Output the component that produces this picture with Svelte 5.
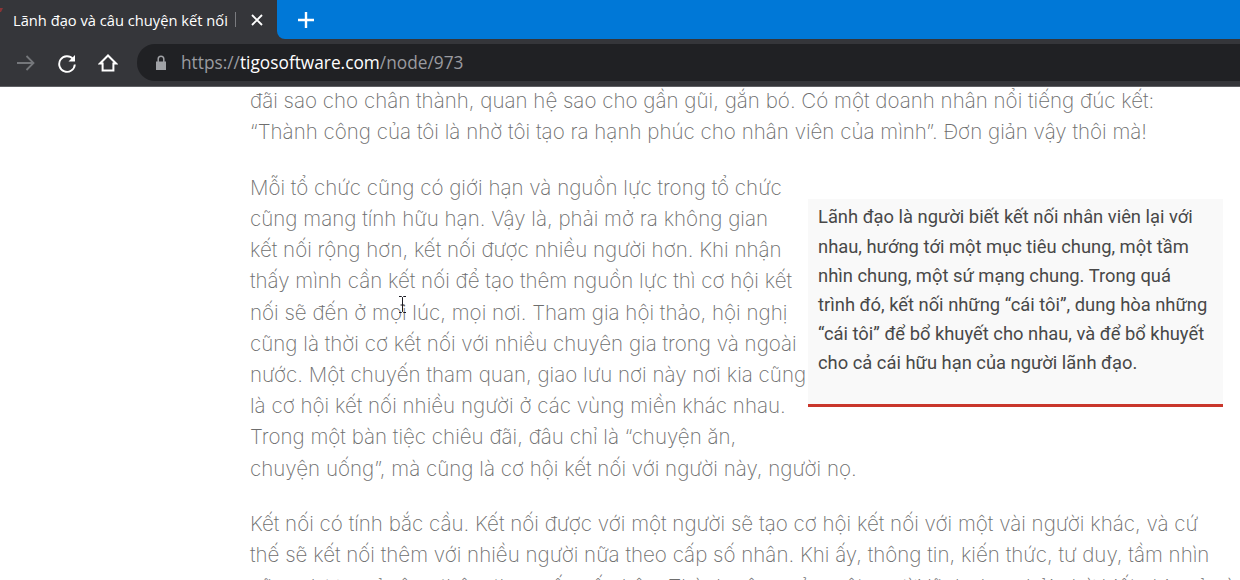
<script>
  const topLines = [
    'đãi sao cho chân thành, quan hệ sao cho gần gũi, gắn bó. Có một doanh nhân nổi tiếng đúc kết:',
    '“Thành công của tôi là nhờ tôi tạo ra hạnh phúc cho nhân viên của mình”. Đơn giản vậy thôi mà!'
  ];
  const midLines = [
    'Mỗi tổ chức cũng có giới hạn và nguồn lực trong tổ chức',
    'cũng mang tính hữu hạn. Vậy là, phải mở ra không gian',
    'kết nối rộng hơn, kết nối được nhiều người hơn. Khi nhận',
    'thấy mình cần kết nối để tạo thêm nguồn lực thì cơ hội kết',
    'nối sẽ đến ở mọi lúc, mọi nơi. Tham gia hội thảo, hội nghị',
    'cũng là thời cơ kết nối với nhiều chuyên gia trong và ngoài',
    'nước. Một chuyến tham quan, giao lưu nơi này nơi kia cũng',
    'là cơ hội kết nối nhiều người ở các vùng miền khác nhau.',
    'Trong một bàn tiệc chiêu đãi, đâu chỉ là “chuyện ăn,',
    'chuyện uống”, mà cũng là cơ hội kết nối với người này, người nọ.'
  ];
  const botLines = [
    'Kết nối có tính bắc cầu. Kết nối được với một người sẽ tạo cơ hội kết nối với một vài người khác, và cứ',
    'thế sẽ kết nối thêm với nhiều người nữa theo cấp số nhân. Khi ấy, thông tin, kiến thức, tư duy, tầm nhìn',
    'cũng được mở rộng thêm theo cấp số nhân. Thành công của một người lãnh đạo phải nhờ biết chia sẻ và'
  ];
  const quote = [
    'Lãnh đạo là người biết kết nối nhân viên lại với',
    'nhau, hướng tới một mục tiêu chung, một tầm',
    'nhìn chung, một sứ mạng chung. Trong quá',
    'trình đó, kết nối những “cái tôi”, dung hòa những',
    '“cái tôi” để bổ khuyết cho nhau, và để bổ khuyết',
    'cho cả cái hữu hạn của người lãnh đạo.'
  ];
</script>

<div class="page">
  <header class="chrome">
    <div class="tabs">
      <div class="tab">
        <span class="title">Lãnh đạo và câu chuyện kết nối</span>
        <span class="sep"></span>
        <svg class="close" viewBox="0 0 12 12" width="12" height="12"><path d="M1 1l10 10M11 1L1 11" stroke="#fff" stroke-width="1.9" fill="none"/></svg>
      </div>
      <div class="strip">
        <svg class="plus" viewBox="0 0 16 16" width="16" height="16"><path d="M8 0v16M0 8h16" stroke="#fff" stroke-width="2.4" fill="none"/></svg>
      </div>
    </div>
    <div class="toolbar">
      <svg class="ic" viewBox="0 0 20 20" width="20" height="20"><path d="M1 10h16.500M10.500 3L17.500 10l-7 7" stroke="#75777b" stroke-width="1.800" fill="none"/></svg>
      <svg class="ic reload" viewBox="0 0 20 20" width="20" height="20"><path d="M16 6A7.800 7.800 0 1 0 17.800 11.500" stroke="#fff" stroke-width="1.900" fill="none"/><path d="M18 2v6.500h-6.500z" fill="#fff"/></svg>
      <svg class="ic home" viewBox="0 0 20 20" width="20" height="20"><path d="M2 10.500L10 2.500l8 8h-2.600v7H4.600v-7z" stroke="#fff" stroke-width="2" stroke-linejoin="miter" fill="none"/></svg>
      <div class="omni">
        <svg class="lock" viewBox="0 0 12 15" width="12" height="15"><path d="M1 6.500h10V15H1z" fill="#a0a2a6"/><path d="M3.200 7V4a2.800 2.800 0 0 1 5.600 0v3" stroke="#a0a2a6" stroke-width="1.500" fill="none"/></svg>
        <span class="url"><span class="dim">https://</span>tigosoftware.com<span class="dim">/node/973</span></span>
      </div>
    </div>
  </header>

  <main class="article">
    <div class="para">
      {#each topLines as l}<div class="ln">{l}</div>{/each}
    </div>
    <div class="float-row">
      <div class="para">
        {#each midLines as l}<div class="ln">{l}</div>{/each}
      </div>
      <aside class="quote">
        {#each quote as l}<div class="qln">{l}</div>{/each}
      </aside>
    </div>
    <div class="para">
      {#each botLines as l}<div class="ln">{l}</div>{/each}
    </div>
  </main>

  <svg class="favicon" viewBox="0 0 3 4" width="3" height="4"><path d="M0 0h3L1 4H0z" fill="#8a3436"/></svg>
  <svg class="cursor" viewBox="0 0 9 17" width="9" height="17"><path d="M1 .5h2.500l1 1 1-1H8M4.500 1.500v14M1 16.500h2.500l1-1 1 1H8M2.500 9h4" stroke="#1c1c24" stroke-width="1" fill="none"/></svg>
</div>

<style>
  :global(body) { margin: 0; background: #fff; overflow: hidden; }
  .page { position: relative; width: 1240px; height: 580px; overflow: hidden; background: #fff; }
  .chrome { height: 87px; background: #35363a; display: flex; flex-direction: column; box-sizing: border-box; border-bottom: 1px solid #5f6064; }
  .tabs { height: 39px; display: flex; }
  .tab { width: 277px; display: flex; align-items: center; padding-left: 13px; box-sizing: border-box; color: #fff; font: 14.700px "Open Sans", "Noto Sans", sans-serif; flex: none; }
  .title { white-space: nowrap; width: 222px; }
  .sep { width: 1px; height: 15px; background: #7a7b7f; }
  .close { margin-left: 15px; }
  .strip { flex: 1; background: #0078d7; border-radius: 0 0 0 8px; display: flex; align-items: center; }
  .plus { margin-left: 21px; }
  .toolbar { flex: 1; display: flex; align-items: center; padding-left: 16px; }
  .ic { flex: none; }
  .reload { margin-left: 21px; }
  .home { margin-left: 21px; }
  .omni { flex: 1; height: 37px; margin-left: 19px; background: #202124; border-radius: 18px 0 0 18px; display: flex; align-items: center; padding-left: 18px; }
  .lock { margin-right: 14px; }
  .url { font: 17.300px "Open Sans", "Noto Sans", sans-serif; color: #fff; white-space: nowrap; }
  .dim { color: #9a9ba0; }
  .article { margin-left: 250px; margin-top: -2px; color: #6e6e6e; font-family: "Inter", "Noto Sans", sans-serif; font-weight: 200; font-size: 20.550px; }
  .para { margin-bottom: 24.500px; }
  .ln { height: 31.200px; line-height: 31.200px; white-space: nowrap; }
  .float-row { position: relative; }
  .quote { position: absolute; left: 558px; top: 27.500px; width: 415px; height: 208px; box-sizing: border-box; background: #f9f9f9; border-bottom: 3px solid #c9362b; padding: 3px 0 0 10px; color: #484848; font: 400 18.350px/29.200px "Roboto", sans-serif; }
  .qln { white-space: nowrap; }
  .favicon { position: absolute; left: 0; top: 8px; }
  .cursor { position: absolute; left: 398px; top: 296px; }
</style>
